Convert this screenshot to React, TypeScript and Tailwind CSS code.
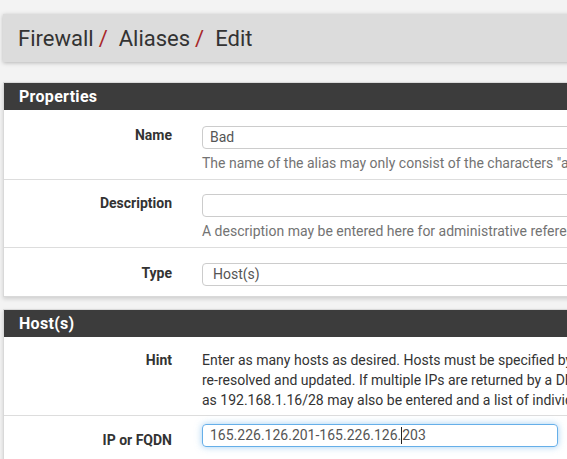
import React from "react";

function Label({ children, pt = "" }: { children: React.ReactNode; pt?: string }) {
  return (
    <div className={`w-[183px] shrink-0 pr-[15px] text-right font-bold text-[14px] leading-[20px] text-[#333333] ${pt}`}>
      {children}
    </div>
  );
}

function Help({ children }: { children: React.ReactNode }) {
  return <div className="mt-[4px] text-[14px] leading-[20px] text-[#737373] whitespace-nowrap">{children}</div>;
}

export default function App() {
  return (
    <div
      className="w-[567px] h-[459px] overflow-hidden bg-[#f3f3f3]"
      style={{ fontFamily: "Roboto, 'Noto Sans', sans-serif" }}
    >
      <div className="w-[1200px] pl-[3px]">
        {/* Breadcrumb */}
        <div className="mt-[14px] h-[48px] flex items-center pl-[15px] bg-[#dcdcdc] shadow-[0_1px_4px_rgba(0,0,0,0.25)] text-[22px] text-[#333333]">
          <span>Firewall</span>
          <span className="ml-[5px] mr-[11px] text-[#a8282a]">/</span>
          <span>Aliases</span>
          <span className="ml-[5px] mr-[11px] text-[#a8282a]">/</span>
          <span>Edit</span>
        </div>

        {/* Properties panel */}
        <div className="mt-[20px] border border-[#d9d9d9] bg-white shadow-[0_2px_4px_rgba(0,0,0,0.15)]">
          <div className="h-[27px] flex items-center pl-[15px] bg-[#3c3c3c] text-white font-bold text-[16px] tracking-[0.3px]">
            Properties
          </div>
          <div className="flex border-b border-[#dddddd] pt-[16px] pb-[6px]">
            <Label pt="-mt-[1px]">Name</Label>
            <div className="pl-[15px] flex-1">
              <div className="h-[23px] border border-[#cccccc] rounded-[4px] pl-[7px] flex items-center text-[14px] text-[#555555]">
                Bad
              </div>
              <Help>The name of the alias may only consist of the characters "a-z, A-Z, 0-9 and _".</Help>
            </div>
          </div>
          <div className="flex border-b border-[#dddddd] pt-[14px] pb-[6px]">
            <Label pt="-mt-[1px]">Description</Label>
            <div className="pl-[15px] flex-1">
              <div className="h-[23px] border border-[#cccccc] rounded-[4px]" />
              <Help>A description may be entered here for administrative reference (not parsed).</Help>
            </div>
          </div>
          <div className="flex pt-[15px] pb-[10px]">
            <Label>Type</Label>
            <div className="pl-[15px] flex-1">
              <div className="h-[23px] border border-[#cccccc] rounded-[4px] pl-[10px] flex items-center text-[14px] text-[#555555]">
                Host(s)
              </div>
            </div>
          </div>
        </div>

        {/* Host(s) panel */}
        <div className="mt-[12px] border border-[#d9d9d9] bg-white shadow-[0_2px_4px_rgba(0,0,0,0.15)]">
          <div className="h-[27px] flex items-center pl-[15px] bg-[#3c3c3c] text-white font-bold text-[16px] tracking-[0.3px]">
            Host(s)
          </div>
          <div className="flex border-b border-[#dddddd] pt-[13px] pb-[5px]">
            <Label>Hint</Label>
            <div className="pl-[15px] flex-1 text-[14px] leading-[20px] text-[#333333] whitespace-nowrap">
              Enter as many hosts as desired. Hosts must be specified by their IP address or fully qualified domain name (FQDN). FQDN hostnames are periodically
              <br />
              re-resolved and updated. If multiple IPs are returned by a DNS query, all are used. An IP range such as 192.168.1.1-192.168.1.10 or a small subnet such
              <br />
              as 192.168.1.16/28 may also be entered and a list of individual IP addresses will be generated.
            </div>
          </div>
          <div className="flex border-b border-[#dddddd] pt-[8px] pb-[9px]">
            <Label pt="pt-[6px]">IP or FQDN</Label>
            <div className="pl-[15px] flex-1">
              <div className="w-[356px] h-[23px] border border-[#66afe9] rounded-[4px] pl-[7px] flex items-center text-[14px] text-[#555555] shadow-[0_0_7px_rgba(102,175,233,0.6)]">
                <span>165.226.126.201-165.226.126.</span>
                <span className="inline-block w-[1px] h-[17px] bg-[#222222]" />
                <span>203</span>
              </div>
            </div>
          </div>
        </div>
      </div>
    </div>
  );
}
